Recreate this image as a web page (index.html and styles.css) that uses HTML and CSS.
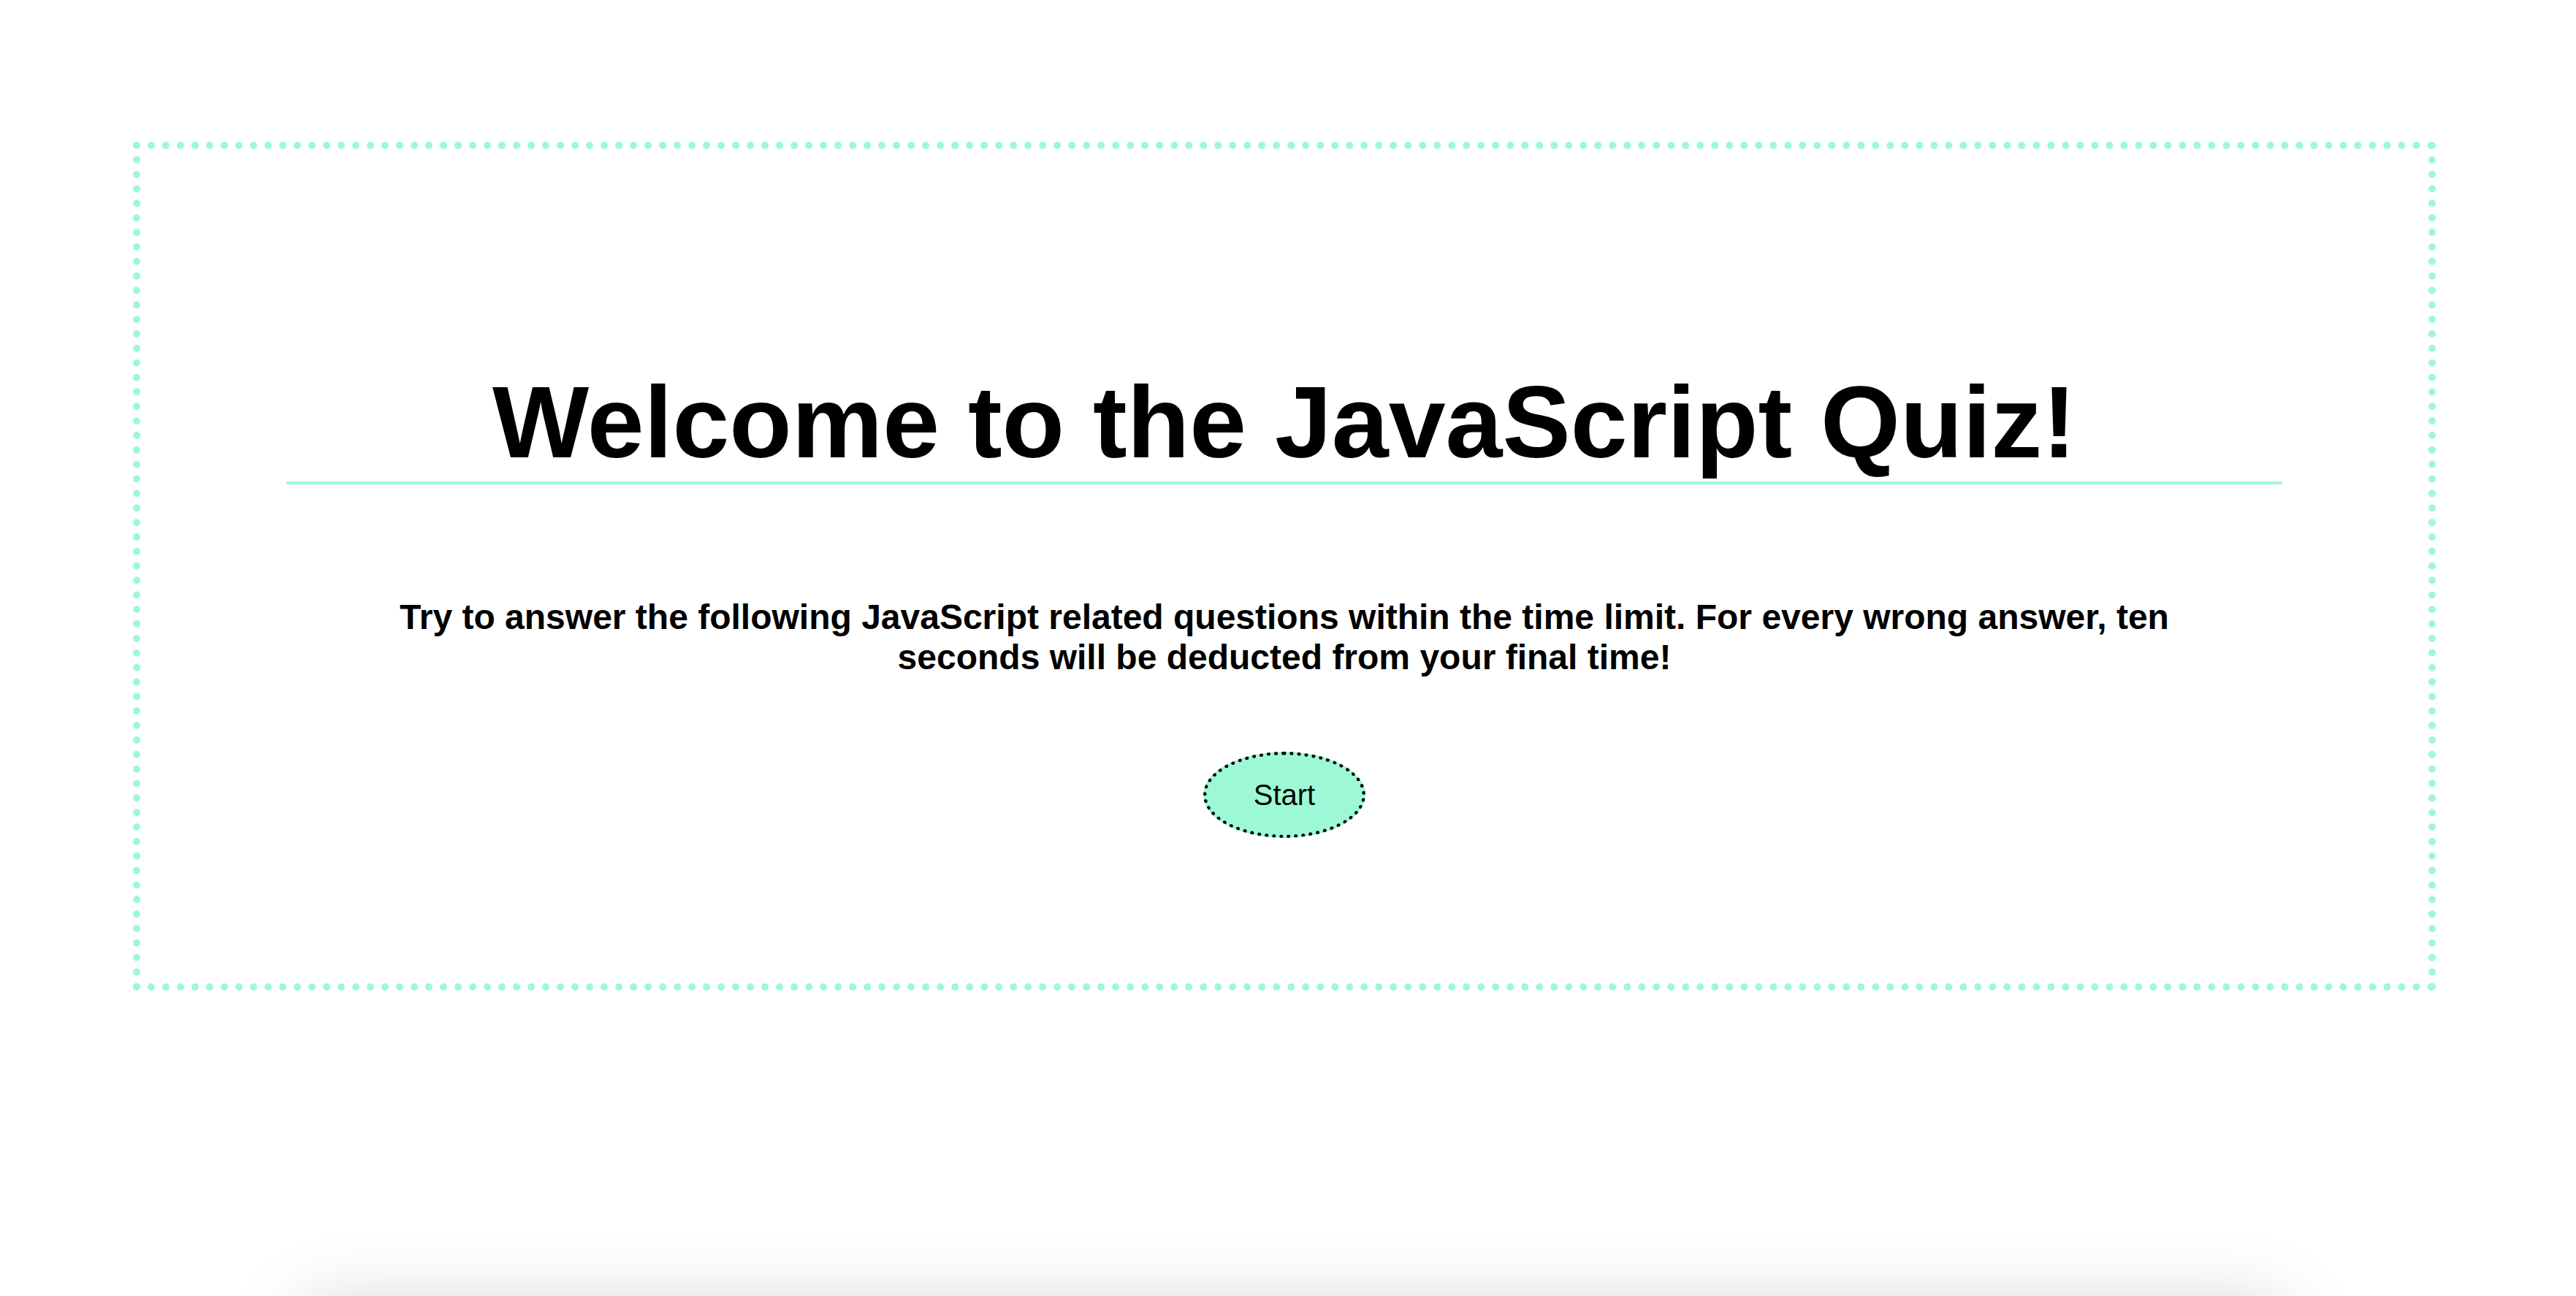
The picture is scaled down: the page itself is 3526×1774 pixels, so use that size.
FILE: index.html
```html
<!DOCTYPE html>
<html lang="en">
<head>
<meta charset="utf-8">
<title>JavaScript Quiz</title>
<link rel="stylesheet" href="styles.css">
</head>
<body>
<main class="quiz">
  <h1 class="quiz-title">Welcome to the JavaScript Quiz!</h1>
  <p class="quiz-intro">Try to answer the following JavaScript related questions within the time limit. For every wrong answer, ten seconds will be deducted from your final time!</p>
  <button class="start-btn" type="button">Start</button>
</main>
<section class="below-card"></section>
</body>
</html>
```
FILE: styles.css
```css
html, body {
  margin: 0;
  padding: 0;
  background: #ffffff;
}

body {
  font-family: "Liberation Sans", Arial, sans-serif;
  color: #000000;
  overflow: hidden;
}

.quiz {
  display: flex;
  flex-direction: column;
  align-items: center;
  box-sizing: border-box;
  width: 3152px;
  margin: 194px 0 0 182px;
  padding: 293px 200px 199px;
  border: 10px dotted #9df9d5;
}

.quiz-title {
  align-self: stretch;
  margin: 0;
  font-size: 140px;
  font-weight: 700;
  text-align: center;
  border-bottom: 4px solid #9df9d5;
}

.quiz-intro {
  max-width: 2520px;
  margin: 154px 0 0;
  font-size: 48px;
  font-weight: 700;
  text-align: center;
}

.start-btn {
  margin-top: 102px;
  padding: 31px 64px;
  font-family: "Liberation Sans", Arial, sans-serif;
  font-size: 40px;
  line-height: 46px;
  color: #000000;
  background: #9df9d5;
  border: 5px dotted #000000;
  border-radius: 50%;
}

.below-card {
  width: 2700px;
  height: 400px;
  margin: 440px 0 0 420px;
  background: #ffffff;
  box-shadow: 0 0 100px rgba(0, 0, 0, 0.22);
}
```
